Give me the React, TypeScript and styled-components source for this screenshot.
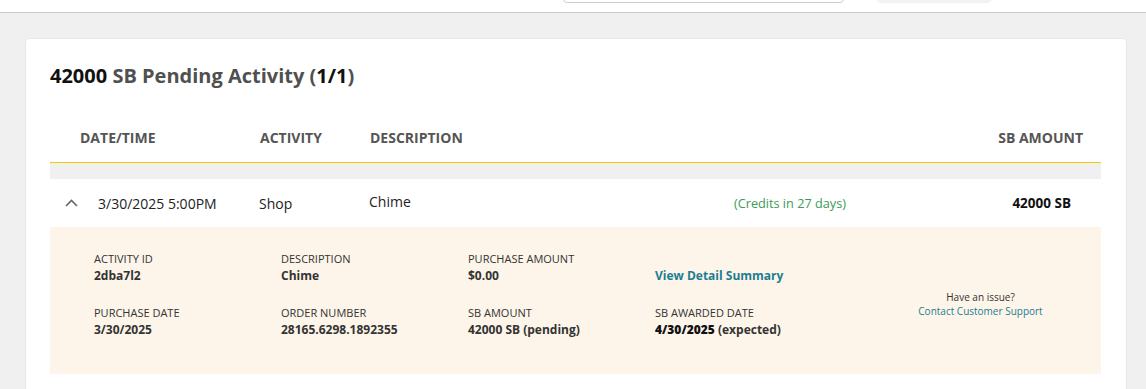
import { ReactElement } from 'react';
import styled, { createGlobalStyle } from 'styled-components';

const GlobalStyle = createGlobalStyle`
  html, body {
    margin: 0;
    padding: 0;
    background: #f0f0f0;
    font-family: "Open Sans", "Liberation Sans", sans-serif;
    color: #222;
  }
  * {
    box-sizing: border-box;
  }
`;

const ScTopBar = styled.header`
  height: 13px;
  background: #fff;
  border-bottom: 1px solid #cccccc;
  overflow: hidden;
  display: flex;
  align-items: flex-end;
  padding: 0 0 9px 563px;
`;
const ScSearch = styled.div`
  width: 281px;
  height: 30px;
  border: 1px solid #cfcfcf;
  border-radius: 4px;
  background: #fff;
  flex-shrink: 0;
`;
const ScTopButton = styled.div`
  width: 114px;
  height: 30px;
  margin-left: 33px;
  border-radius: 4px;
  background: #f2f2f2;
  flex-shrink: 0;
`;

const ScMain = styled.main`
  padding: 26px 0 0 26px;
`;
const ScCard = styled.section`
  width: 1100px;
  min-height: 360px;
  background: #fff;
  border-radius: 4px 4px 0 0;
  box-shadow: 0 0 0 1px #e8e8e8;
  padding: 23px 25px 15px 24px;
`;
const ScTitle = styled.h2`
  margin: 0;
  font-size: 20px;
  line-height: 27px;
  font-weight: 700;
  color: #505050;
  
  b {
    color: #111;
    font-weight: 700;
  }
`;

const ScHeadRow = styled.div`
  margin-top: 25px;
  height: 49px;
  display: grid;
  grid-template-columns: 180px 110px 1fr auto;
  align-items: center;
  padding: 0 18px 2px 30px;
  border-bottom: 1px solid #f7c600;
  font-size: 14px;
  font-weight: 700;
  color: #555;
  text-transform: uppercase;
`;
const ScStripe = styled.div`
  height: 16px;
  background: #f0f0f0;
`;
const ScRow = styled.div`
  height: 48px;
  display: grid;
  grid-template-columns: 48px 161px 110px 365px 1fr auto;
  align-items: center;
  padding-right: 30px;
  font-size: 14px;
  color: #222;
`;
const ScToggle = styled.span`
  display: flex;
  padding-left: 15px;
  color: #666;
`;
const ScDesc = styled.span`
  margin-top: -3px;
`;
const ScCredits = styled.span`
  font-size: 12.7px;
  color: #3d9a57;
`;
const ScAmount = styled.span`
  font-size: 13.5px;
  font-weight: 700;
  color: #111;
`;

const ScPanel = styled.div`
  height: 147px;
  background: #fdf5e9;
  padding: 24px 0 0 44px;
  display: grid;
  grid-template-columns: 187px 187px 187px 187px 1fr;
  grid-template-rows: 33px 33px;
  row-gap: 21px;
`;
const ScField = styled.div`
  display: flex;
  flex-direction: column;
`;
const ScLabel = styled.span`
  font-size: 11px;
  line-height: 16px;
  color: #333;
  text-transform: uppercase;
`;
const ScValue = styled.span<{ $link?: boolean }>`
  font-size: 12px;
  line-height: 17px;
  font-weight: 700;
  color: ${p => p.$link ? '#1c7d93' : '#333'};

  b {
    color: #111;
  }
`;
const ScSupport = styled.div`
  grid-column: 5;
  grid-row: 1 / span 2;
  margin-top: 39px;
  padding-left: 18px;
  display: flex;
  flex-direction: column;
  align-items: center;
  font-size: 10px;
  line-height: 14px;
  color: #333;
`;
const ScSupportLink = styled.a`
  color: #1c7d93;
  text-decoration: none;
`;

function ChevronUp(): ReactElement {
  return <svg width="13" height="8" viewBox="0 0 13 8" fill="none">
    <polyline points="1,7 6.5,1.5 12,7" stroke="currentColor" strokeWidth="1.6" />
  </svg>;
}

interface Detail {
  label: string;
  value: ReactElement | string;
  link?: boolean;
}

const details: Detail[] = [
  { label: 'Activity ID', value: '2dba7l2' },
  { label: 'Description', value: 'Chime' },
  { label: 'Purchase Amount', value: '$0.00' },
  { label: '', value: 'View Detail Summary', link: true },
  { label: 'Purchase Date', value: '3/30/2025' },
  { label: 'Order Number', value: '28165.6298.1892355' },
  { label: 'SB Amount', value: '42000 SB (pending)' },
  { label: 'SB Awarded Date', value: <><b>4/30/2025</b> (expected)</> }
];

export default function App(): ReactElement {
  return <>
    <GlobalStyle />
    <ScTopBar>
      <ScSearch />
      <ScTopButton />
    </ScTopBar>
    <ScMain>
      <ScCard>
        <ScTitle><b>42000</b> SB Pending Activity (<b>1/1</b>)</ScTitle>
        <ScHeadRow>
          <span>Date/Time</span>
          <span>Activity</span>
          <span>Description</span>
          <span>SB Amount</span>
        </ScHeadRow>
        <ScStripe />
        <ScRow>
          <ScToggle><ChevronUp /></ScToggle>
          <span>3/30/2025 5:00PM</span>
          <span>Shop</span>
          <ScDesc>Chime</ScDesc>
          <ScCredits>(Credits in 27 days)</ScCredits>
          <ScAmount>42000 SB</ScAmount>
        </ScRow>
        <ScPanel>
          {details.map((d, i) => <ScField key={i}>
            <ScLabel>{d.label || '\u00a0'}</ScLabel>
            <ScValue $link={d.link}>{d.value}</ScValue>
          </ScField>)}
          <ScSupport>
            <span>Have an issue?</span>
            <ScSupportLink href="#">Contact Customer Support</ScSupportLink>
          </ScSupport>
        </ScPanel>
      </ScCard>
    </ScMain>
  </>;
}
